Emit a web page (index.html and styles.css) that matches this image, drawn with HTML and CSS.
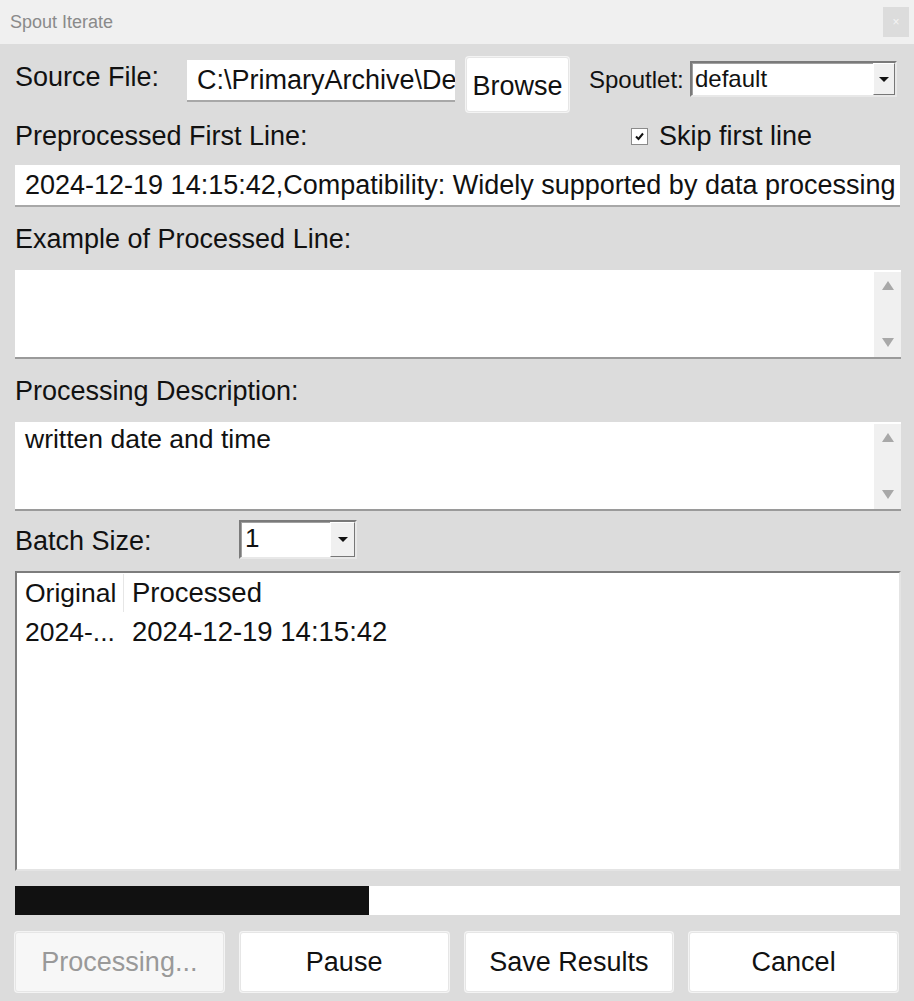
FILE: index.html
```html
<!DOCTYPE html>
<html>
<head>
<meta charset="utf-8">
<link rel="stylesheet" href="styles.css">
</head>
<body>
<div class="window">
  <div class="titlebar">
    <span class="title">Spout Iterate</span>
    <span class="close">×</span>
  </div>
  <div class="content">
    <div class="row1">
      <span class="label src-label">Source File:</span>
      <div class="entry src-entry"><span>C:\PrimaryArchive\Desk</span></div>
      <div class="btn browse">Browse</div>
      <span class="label spout-label">Spoutlet:</span>
      <div class="combo spout-combo">
        <span class="combo-text">default</span>
        <span class="combo-arrow"><span class="tri"></span></span>
      </div>
    </div>
    <div class="row2">
      <span class="label">Preprocessed First Line:</span>
      <div class="check">
        <span class="box"><svg width="11" height="11" viewBox="0 0 11 11"><path d="M2 5.5 L4.5 8 L9 2.5" fill="none" stroke="#111" stroke-width="2"/></svg></span>
        <span class="label skip-label">Skip first line</span>
      </div>
    </div>
    <div class="entry wide-entry"><span>2024-12-19 14:15:42,Compatibility: Widely supported by data processing tools</span></div>
    <div class="label-row"><span class="label">Example of Processed Line:</span></div>
    <div class="textbox">
      <div class="text-area"></div>
      <div class="vscroll"><span class="up"></span><span class="down"></span></div>
    </div>
    <div class="label-row"><span class="label">Processing Description:</span></div>
    <div class="textbox">
      <div class="text-area">written date and time</div>
      <div class="vscroll"><span class="up"></span><span class="down"></span></div>
    </div>
    <div class="batch-row">
      <span class="label batch-label">Batch Size:</span>
      <div class="combo batch-combo">
        <span class="combo-text">1</span>
        <span class="combo-arrow"><span class="tri"></span></span>
      </div>
    </div>
    <div class="list">
      <div class="list-head">
        <span class="col-orig">Original</span>
        <span class="col-proc">Processed</span>
      </div>
      <div class="list-row">
        <span class="col-orig">2024-...</span>
        <span class="col-proc">2024-12-19 14:15:42</span>
      </div>
    </div>
    <div class="progress"><div class="fill" style="width: 40%"></div></div>
    <div class="buttons">
      <div class="btn big disabled">Processing...</div>
      <div class="btn big">Pause</div>
      <div class="btn big">Save Results</div>
      <div class="btn big">Cancel</div>
    </div>
  </div>
</div>
</body>
</html>
```
FILE: styles.css
```css
* { box-sizing: border-box; }
html, body {
  margin: 0;
  padding: 0;
  width: 914px;
  height: 1001px;
  overflow: hidden;
  background: #dcdcdc;
  font-family: "Liberation Sans", Arial, sans-serif;
  color: #111;
}
.window {
  width: 914px;
  height: 1001px;
  display: flex;
  flex-direction: column;
}
.titlebar {
  height: 44px;
  background: #f0f0f0;
  display: flex;
  align-items: center;
  justify-content: space-between;
  padding: 0 5px 0 10px;
}
.title {
  font-size: 18px;
  color: #8a8a8a;
}
.close {
  width: 26px;
  height: 30px;
  background: #dcdcdc;
  color: #f4f4f4;
  font-size: 12px;
  display: flex;
  align-items: center;
  justify-content: center;
}
.content {
  flex: 1;
  padding: 0 14px 0 15px;
  display: flex;
  flex-direction: column;
}
.label {
  font-size: 27px;
  white-space: nowrap;
}
.row1 {
  margin-top: 13px;
  height: 55px;
  display: flex;
  align-items: center;
}
.src-label { width: 172px; margin-top: -14px; }
.entry {
  background: #fff;
  border-bottom: 2px solid #a8a8a8;
  overflow: hidden;
  white-space: nowrap;
  font-size: 27px;
  display: flex;
  align-items: center;
  padding-left: 10px;
}
.src-entry {
  width: 268px;
  height: 42px;
  align-self: flex-start;
  margin-top: 3px;
}
.btn {
  background: #fff;
  border: 1px solid #e6e6e6;
  border-radius: 3px;
  display: flex;
  align-items: center;
  justify-content: center;
  white-space: nowrap;
  box-shadow: 0 0 0 1px #f4f4f4;
}
.browse {
  width: 103px;
  height: 55px;
  margin-left: 11px;
  font-size: 27px;
  padding-top: 3px;
}
.spout-label { margin-left: 20px; font-size: 24px; width: 101px; margin-top: -10px; }
.combo {
  background: #fff;
  border: 2px solid;
  border-color: #7a7a7a #e8e8e8 #e8e8e8 #7a7a7a;
  display: flex;
  align-items: stretch;
  box-shadow: inset 1px 1px 0 #a0a0a0;
}
.spout-combo {
  width: 207px;
  height: 36px;
  align-self: flex-start;
  margin-top: 4px;
}
.combo-text {
  flex: 1;
  font-size: 24px;
  padding-left: 3px;
  line-height: 32px;
}
.combo-arrow {
  width: 22px;
  background: #f0f0f0;
  border: 1px solid;
  border-color: #fff #777 #777 #fff;
  display: flex;
  align-items: center;
  justify-content: center;
}
.tri {
  width: 0;
  height: 0;
  border-left: 5px solid transparent;
  border-right: 5px solid transparent;
  border-top: 5px solid #111;
}
.row2 {
  height: 48px;
  display: flex;
  align-items: center;
  justify-content: space-between;
  padding-top: 0;
}
.check {
  display: flex;
  align-items: center;
  margin-right: 88px;
}
.skip-label { font-size: 27px; }
.box {
  width: 17px;
  height: 17px;
  background: #fff;
  border: 1px solid #8a8a8a;
  display: flex;
  align-items: center;
  justify-content: center;
  margin-right: 11px;
}
.wide-entry {
  margin-top: 5px;
  height: 42px;
  width: 885px;
}
.label-row {
  height: 63px;
  display: flex;
  align-items: center;
  padding-top: 2px;
}
.textbox {
  height: 89px;
  width: 886px;
  background: #fff;
  border-bottom: 2px solid #9a9a9a;
  display: flex;
}
.text-area {
  flex: 1;
  font-size: 26.5px;
  padding: 2px 10px;
}
.vscroll {
  width: 27px;
  background: #f0f0f0;
  display: flex;
  flex-direction: column;
  justify-content: space-between;
  align-items: center;
  padding: 9px 0 10px;
  margin: 2px 0 0;
}
.up, .down {
  width: 0;
  height: 0;
  border-left: 6px solid transparent;
  border-right: 6px solid transparent;
}
.up { border-bottom: 9px solid #a8a8a8; }
.down { border-top: 9px solid #a8a8a8; }
.batch-row {
  height: 60px;
  display: flex;
  align-items: center;
}
.batch-label { width: 224px; margin-top: 0; }
.batch-combo {
  width: 118px;
  height: 39px;
  margin-top: -4px;
}
.batch-combo .combo-text { font-size: 26px; padding-left: 4px; line-height: 33px; }
.batch-combo .combo-arrow { width: 25px; }
.list {
  height: 300px;
  width: 886px;
  background: #fff;
  border: 2px solid;
  border-color: #7d7d7d #e4e4e4 #e4e4e4 #7d7d7d;
  font-size: 27.5px;
}
.list-head, .list-row {
  display: flex;
  height: 38px;
  align-items: center;
}
.list-head { height: 40px; padding-top: 0; }
.col-orig {
  width: 107px;
  padding-left: 8px;
  white-space: nowrap;
  font-size: 26.5px;
}
.list-head .col-orig { border-right: 1px solid #e6e6e6; height: 38px; display: flex; align-items: center; }
.col-proc { padding-left: 8px; white-space: nowrap; }
.progress {
  margin-top: 15px;
  height: 29px;
  width: 885px;
  background: #fff;
}
.fill {
  height: 100%;
  background: #111;
}
.buttons {
  margin-top: 17px;
  display: flex;
  gap: 16px;
  width: 883px;
}
.btn.big {
  flex: 1;
  height: 60px;
  font-size: 27px;
}
.btn.disabled {
  background: #f7f7f7;
  color: #999;
}
```
